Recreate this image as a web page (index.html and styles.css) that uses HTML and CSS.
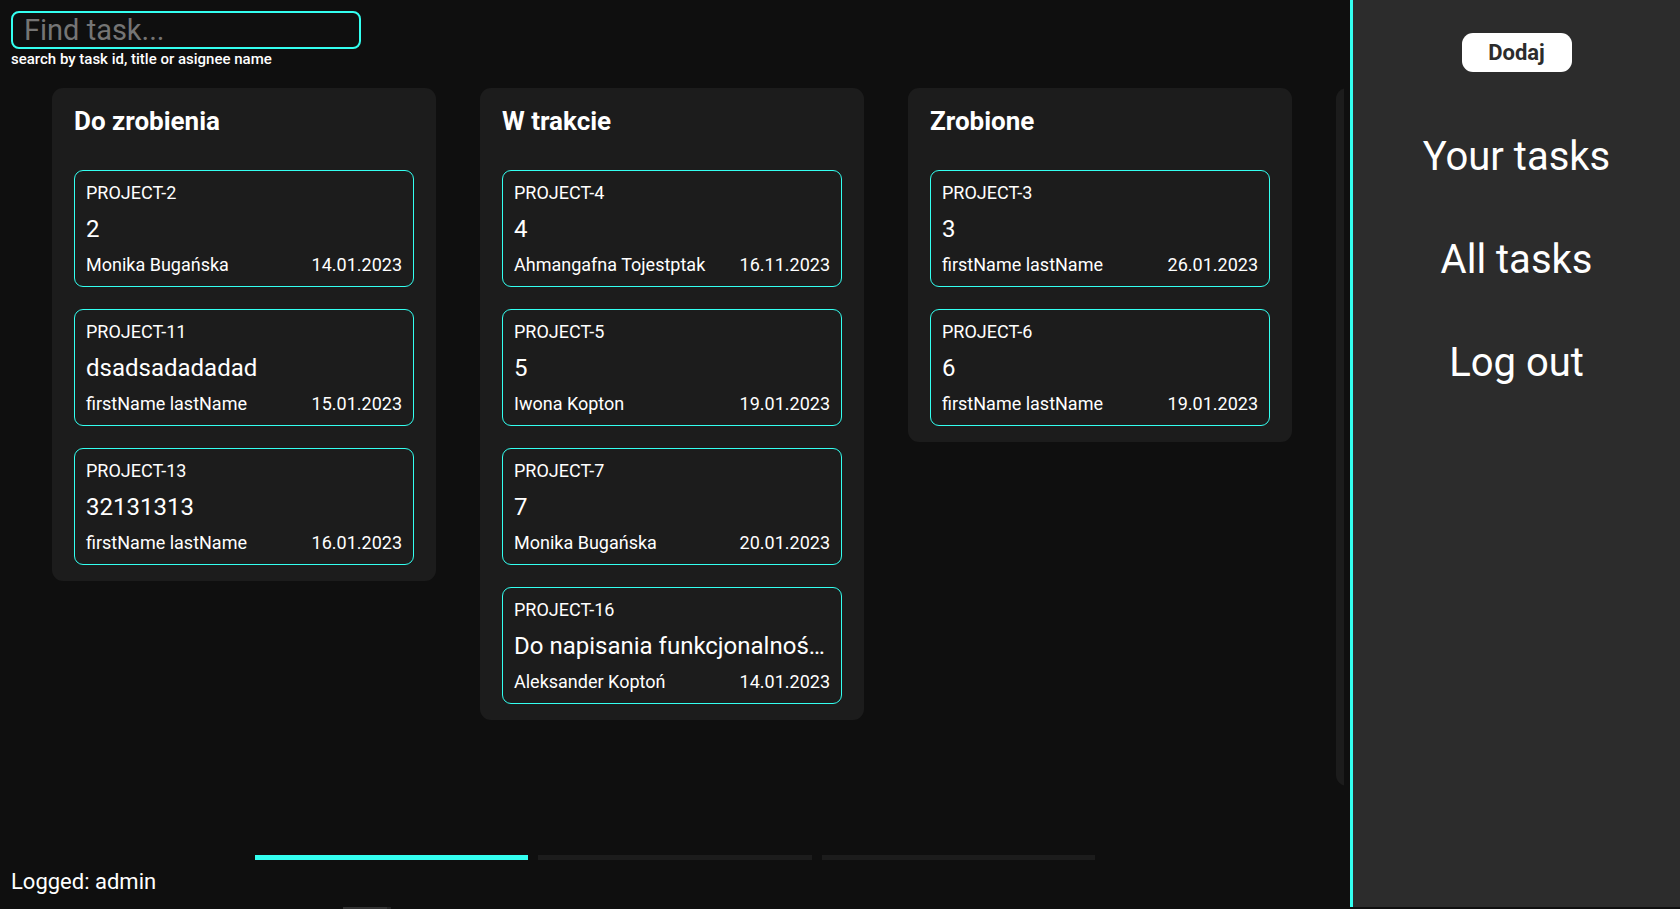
FILE: index.html
```html
<!DOCTYPE html>
<html lang="pl">
<head>
<meta charset="utf-8">
<meta name="viewport" content="width=device-width, initial-scale=1">
<title>Tasks</title>
<link rel="stylesheet" href="styles.css">
</head>
<body>
<div class="app">
  <main class="main">
    <div class="search">
      <input class="search-input" id="search" type="search" placeholder="Find task...">
      <label class="search-hint" for="search">search by task id, title or asignee name</label>
    </div>
    <div class="board">
      <section class="column">
        <h2 class="column-title">Do zrobienia</h2>
        <article class="task">
          <p class="task-id">PROJECT-2</p>
          <h3 class="task-title">2</h3>
          <div class="task-meta"><span>Monika Bugańska</span><time>14.01.2023</time></div>
        </article>
        <article class="task">
          <p class="task-id">PROJECT-11</p>
          <h3 class="task-title">dsadsadadadad</h3>
          <div class="task-meta"><span>firstName lastName</span><time>15.01.2023</time></div>
        </article>
        <article class="task">
          <p class="task-id">PROJECT-13</p>
          <h3 class="task-title">32131313</h3>
          <div class="task-meta"><span>firstName lastName</span><time>16.01.2023</time></div>
        </article>
      </section>
      <section class="column">
        <h2 class="column-title">W trakcie</h2>
        <article class="task">
          <p class="task-id">PROJECT-4</p>
          <h3 class="task-title">4</h3>
          <div class="task-meta"><span>Ahmangafna Tojestptak</span><time>16.11.2023</time></div>
        </article>
        <article class="task">
          <p class="task-id">PROJECT-5</p>
          <h3 class="task-title">5</h3>
          <div class="task-meta"><span>Iwona Kopton</span><time>19.01.2023</time></div>
        </article>
        <article class="task">
          <p class="task-id">PROJECT-7</p>
          <h3 class="task-title">7</h3>
          <div class="task-meta"><span>Monika Bugańska</span><time>20.01.2023</time></div>
        </article>
        <article class="task">
          <p class="task-id">PROJECT-16</p>
          <h3 class="task-title">Do napisania funkcjonalnoś…</h3>
          <div class="task-meta"><span>Aleksander Koptoń</span><time>14.01.2023</time></div>
        </article>
      </section>
      <section class="column">
        <h2 class="column-title">Zrobione</h2>
        <article class="task">
          <p class="task-id">PROJECT-3</p>
          <h3 class="task-title">3</h3>
          <div class="task-meta"><span>firstName lastName</span><time>26.01.2023</time></div>
        </article>
        <article class="task">
          <p class="task-id">PROJECT-6</p>
          <h3 class="task-title">6</h3>
          <div class="task-meta"><span>firstName lastName</span><time>19.01.2023</time></div>
        </article>
      </section>
      <section class="column column-full"></section>
    </div>
    <div class="pager">
      <span class="page page-active"></span>
      <span class="page"></span>
      <span class="page"></span>
    </div>
    <p class="logged">Logged: admin</p>
  </main>
  <aside class="sidebar">
    <button class="add" type="button">Dodaj</button>
    <nav class="nav">
      <a class="nav-link" href="#">Your tasks</a>
      <a class="nav-link" href="#">All tasks</a>
      <a class="nav-link" href="#">Log out</a>
    </nav>
  </aside>
</div>
<div class="scroll-strip"><div class="scroll-thumb"></div></div>
</body>
</html>
```
FILE: styles.css
```css
* {
  box-sizing: border-box;
  margin: 0;
}

body {
  display: flex;
  flex-direction: column;
  height: 100vh;
  overflow: hidden;
  background: #0f0f0f;
  color: #fff;
  font-family: Roboto, "Liberation Sans", sans-serif;
}

.app {
  display: flex;
  flex: 1;
  min-height: 0;
}

.main {
  display: flex;
  flex: 1;
  flex-direction: column;
  min-width: 0;
  padding: 11px 6px 11px 0;
}

.search {
  display: flex;
  flex-direction: column;
  align-items: flex-start;
  padding-left: 11px;
}

.search-input {
  width: 350px;
  height: 38px;
  padding: 0 11px;
  border: 2px solid #33fff0;
  border-radius: 8px;
  outline: none;
  background: transparent;
  color: #fff;
  font-family: inherit;
  font-size: 29px;
}

.search-input::placeholder {
  color: #757575;
}

.search-hint {
  font-size: 15px;
  font-weight: 500;
  line-height: 20px;
}

.board {
  display: flex;
  flex: 1;
  gap: 44px;
  align-items: flex-start;
  min-height: 0;
  margin-top: 19px;
  padding: 0 0 69px 52px;
  overflow: hidden;
}

.column {
  flex: 0 0 384px;
  min-width: 0;
  max-height: 100%;
  padding: 16px 22px;
  border-radius: 11px;
  background: #1c1c1c;
}

.column-full {
  height: 100%;
}

.column-title {
  margin-bottom: 32px;
  font-size: 26px;
  font-weight: 700;
  line-height: 34px;
}

.task {
  padding: 10px 11px 9px;
  border: 1px solid #33fff0;
  border-radius: 9px;
}

.task + .task {
  margin-top: 22px;
}

.task-id,
.task-meta {
  font-size: 18px;
  line-height: 24px;
}

.task-title {
  margin: 11px 0 10px;
  overflow: hidden;
  font-size: 24px;
  font-weight: 400;
  line-height: 27px;
  text-overflow: ellipsis;
  white-space: nowrap;
}

.task-meta {
  display: flex;
  justify-content: space-between;
}

.pager {
  display: flex;
  gap: 10px;
  width: 840px;
  margin: 0 249px 0 255px;
}

.page {
  flex: 1;
  height: 5px;
  background: #1c1c1c;
}

.page-active {
  background: #33fff0;
}

.logged {
  margin-top: 8px;
  padding-left: 11px;
  font-size: 22px;
  line-height: 28px;
}

.sidebar {
  display: flex;
  flex: 0 0 330px;
  flex-direction: column;
  align-items: center;
  padding-top: 33px;
  border-left: 3px solid #33fff0;
  background: #2c2c2c;
}

.add {
  width: 110px;
  height: 39px;
  padding: 0;
  border: 0;
  border-radius: 11px;
  background: #fff;
  color: #2c2c2c;
  font-family: inherit;
  font-size: 22px;
  font-weight: 700;
}

.nav {
  display: flex;
  flex-direction: column;
  gap: 55px;
  align-items: center;
  margin-top: 61px;
}

.nav-link {
  color: #fff;
  font-size: 40px;
  line-height: 48px;
  text-decoration: none;
}

.scroll-strip {
  height: 2px;
  padding-left: 343px;
  background: #0f0f0f;
}

.scroll-thumb {
  width: 48px;
  height: 2px;
  border-right: 4px solid #242424;
  background: #333;
}
```
